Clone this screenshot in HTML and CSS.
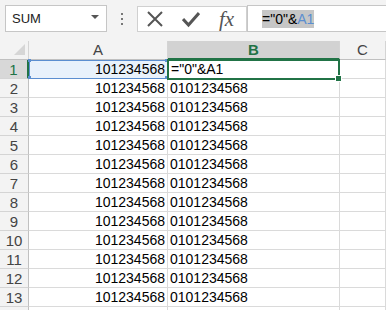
FILE: index.html
```html
<!DOCTYPE html>
<html>
<head>
<meta charset="utf-8">
<link rel="stylesheet" href="styles.css">
</head>
<body>
<div class="toolbar">
  <div class="namebox"><span>SUM</span><span class="dd"></span></div>
  <div class="dots"><i></i><i></i><i></i></div>
  <div class="btns">
    <svg class="ico" width="18" height="18" viewBox="0 0 18 18"><path d="M2 2 L16 16 M16 2 L2 16" stroke="#555" stroke-width="2" fill="none"/></svg>
    <svg class="ico" width="18" height="18" viewBox="0 0 18 18"><path d="M1 9 L6.5 15 L17 3" stroke="#555" stroke-width="3" fill="none"/></svg>
    <span class="fx">fx</span>
  </div>
  <div class="fbar"><span class="sel">="0"&amp;<span class="ref">A1</span></span></div>
</div>
<div class="grid">
  <div class="corner"><span class="tri"></span></div>
  <div class="ch">A</div>
  <div class="ch active">B</div>
  <div class="ch">C</div>

  <div class="rh active">1</div>
  <div class="c num refcell">101234568<span class="h tl"></span><span class="h tr"></span><span class="h bl"></span><span class="h br"></span></div>
  <div class="c editcell">="0"&amp;A1<span class="fill"></span></div>
  <div class="c"></div>

  <div class="rh">2</div><div class="c num">101234568</div><div class="c">0101234568</div><div class="c"></div>
  <div class="rh">3</div><div class="c num">101234568</div><div class="c">0101234568</div><div class="c"></div>
  <div class="rh">4</div><div class="c num">101234568</div><div class="c">0101234568</div><div class="c"></div>
  <div class="rh">5</div><div class="c num">101234568</div><div class="c">0101234568</div><div class="c"></div>
  <div class="rh">6</div><div class="c num">101234568</div><div class="c">0101234568</div><div class="c"></div>
  <div class="rh">7</div><div class="c num">101234568</div><div class="c">0101234568</div><div class="c"></div>
  <div class="rh">8</div><div class="c num">101234568</div><div class="c">0101234568</div><div class="c"></div>
  <div class="rh">9</div><div class="c num">101234568</div><div class="c">0101234568</div><div class="c"></div>
  <div class="rh">10</div><div class="c num">101234568</div><div class="c">0101234568</div><div class="c"></div>
  <div class="rh">11</div><div class="c num">101234568</div><div class="c">0101234568</div><div class="c"></div>
  <div class="rh">12</div><div class="c num">101234568</div><div class="c">0101234568</div><div class="c"></div>
  <div class="rh">13</div><div class="c num">101234568</div><div class="c">0101234568</div><div class="c"></div>
  <div class="rh"></div><div class="c"></div><div class="c"></div><div class="c"></div>
</div>
</body>
</html>
```
FILE: styles.css
```css
html, body { margin: 0; padding: 0; }
body {
  width: 386px; height: 310px; overflow: hidden;
  background: #fff;
  font-family: "Liberation Sans", Arial, sans-serif;
  color: #000;
}
.toolbar {
  height: 41px;
  box-sizing: border-box;
  background: #f3f3f3;
  display: flex;
  align-items: flex-start;
  padding-top: 5px;
  padding-left: 5px;
}
.namebox {
  width: 102px; height: 27px; box-sizing: border-box;
  background: #fff; border: 1px solid #c6c6c6;
  display: flex; align-items: center; justify-content: space-between;
  padding: 0 7px 0 6px;
  font-size: 13px; color: #222;
}
.dd {
  width: 0; height: 0;
  border-left: 4px solid transparent; border-right: 4px solid transparent;
  border-top: 4px solid #555;
  margin-bottom: 3px;
}
.dots {
  width: 30px; height: 27px;
  display: flex; flex-direction: column; align-items: center; justify-content: center; gap: 3px;
}
.dots i { display: block; width: 2px; height: 2px; background: #777; }
.btns {
  margin-top: 1px;
  width: 110px; height: 26px; box-sizing: border-box;
  background: #fff; border: 1px solid #d0d0d0;
  display: flex; align-items: center;
  padding-left: 8px; gap: 18px;
}
.fx {
  font-family: "Liberation Serif", "Times New Roman", serif;
  font-style: italic; font-size: 21px; color: #555;
  line-height: 24px; margin-left: 1px;
}
.fbar {
  flex: 1; height: 27px; box-sizing: border-box;
  background: #fff; border: 1px solid #c6c6c6; border-right: none;
  display: flex; align-items: center; padding-left: 14px;
  font-size: 14px;
}
.sel { background: #c6c6c6; color: #000; padding: 1px 0; }
.ref { color: #5b8ed0; }
.grid {
  display: grid;
  grid-template-columns: 29px 139px 172px 46px;
  grid-auto-rows: 19px;
}
.corner, .ch, .rh {
  background: #f3f3f3;
  box-sizing: border-box;
  border-right: 1px solid #d4d4d4;
  border-bottom: 1px solid #d4d4d4;
  color: #444;
  font-size: 15px;
}
.corner { position: relative; border-bottom-color: #c0c0c0; }
.tri {
  position: absolute; right: 3px; bottom: 4px;
  width: 0; height: 0;
  border-left: 11px solid transparent;
  border-bottom: 11px solid #d6d6d6;
}
.ch {
  display: flex; align-items: flex-end; justify-content: center;
  padding-bottom: 1px;
  border-bottom-color: #c0c0c0;
}
.ch.active {
  background: #d2d2d2; color: #217346; font-weight: bold;
  border-bottom: 2px solid #217346; padding-bottom: 0;
}
.rh {
  display: flex; align-items: center; justify-content: center;
  border-right-color: #c0c0c0;
}
.rh.active {
  background: #d8d8d8; color: #217346;
  border-right: 2px solid #217346;
}
.c {
  box-sizing: border-box;
  border-right: 1px solid #dadada;
  border-bottom: 1px solid #dadada;
  font-size: 14px;
  line-height: 18px;
  padding: 0 2px;
  white-space: nowrap;
  position: relative;
}
.num { text-align: right; }
.refcell {
  background: #e8f1fb;
  outline: 1px solid #5b8ed0;
  outline-offset: -1px;
}
.h {
  position: absolute; width: 3px; height: 3px; background: #5b8ed0;
}
.h.tl { left: -1px; top: -1px; }
.h.tr { right: -1px; top: -1px; }
.h.bl { left: -1px; bottom: -1px; }
.h.br { right: -1px; bottom: -1px; }
.editcell {
  border: 2px solid #217346;
  margin-left: -1px;
  margin-top: -1px;
  height: 21px;
  z-index: 2;
  line-height: 17px;
  padding-left: 2px;
}
.fill {
  position: absolute; right: -4px; bottom: -4px;
  width: 5px; height: 5px; background: #217346;
  border: 1px solid #fff;
}
```
